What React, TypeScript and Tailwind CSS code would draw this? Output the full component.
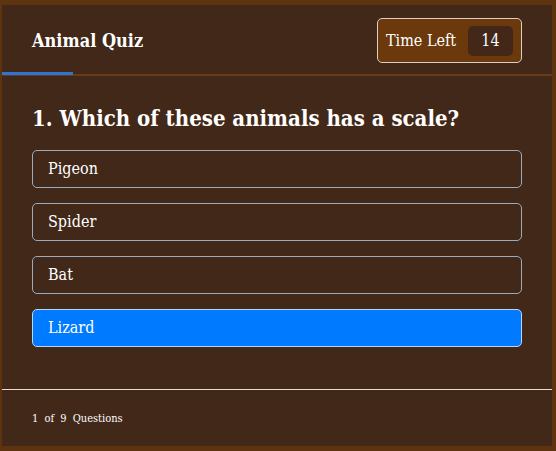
const options = ['Pigeon', 'Spider', 'Bat', 'Lizard'];

export default function App() {
  const selected = 3;
  return (
    <div
      className="w-[556px] h-[451px] bg-[#5e3410] pt-[5px] pl-[2px] pr-[4px] pb-[5px] font-stretch-condensed"
      style={{ fontFamily: '"DejaVu Serif Condensed", "DejaVu Serif", "Liberation Serif", serif' }}
    >
      <div className="h-full bg-[#422818] flex flex-col">
        {/* Header */}
        <div className="relative h-[71px] border-b-2 border-[#6a3a14] flex items-center justify-between pl-[30px] pr-[30px] pt-[2px]">
          <h1 className="text-[18px] font-bold text-white">Animal Quiz</h1>
          <div className="flex items-center h-[45px] w-[145px] bg-[#6b390b] border border-[#d8cfc6] rounded-[5px] pl-[8px] pr-[8px] justify-between">
            <span className="text-[16px] text-white">Time Left</span>
            <span className="w-[45px] h-[30px] rounded-[5px] bg-[#43281a] text-white text-[16px] flex items-center justify-center">14</span>
          </div>
          <div className="absolute left-0 bottom-[-1px] w-[71px] h-[3px] bg-[#2a76d8]" />
        </div>

        {/* Question */}
        <div className="px-[30px] pt-[27px] pb-[42px]">
          <h2 className="text-[22px] font-bold text-white leading-[30px] mb-[17px]">
            1. Which of these animals has a scale?
          </h2>
          <div className="flex flex-col gap-[15px]">
            {options.map((o, i) => (
              <div
                key={o}
                className={
                  i === selected
                    ? 'h-[38px] rounded-[5px] border border-[#b9d6f5] bg-[#007bff] text-white text-[16px] flex items-center pl-[15px]'
                    : 'h-[38px] rounded-[5px] border border-[#9aabbd] text-white text-[16px] flex items-center pl-[15px]'
                }
              >
                {o}
              </div>
            ))}
          </div>
        </div>

        {/* Footer */}
        <div className="border-t border-[#e6ddd2] flex-1 flex items-center pl-[30px] pt-[2px]">
          <span className="text-[11px] text-white [word-spacing:3px]">1 of 9 Questions</span>
        </div>
      </div>
    </div>
  );
}
